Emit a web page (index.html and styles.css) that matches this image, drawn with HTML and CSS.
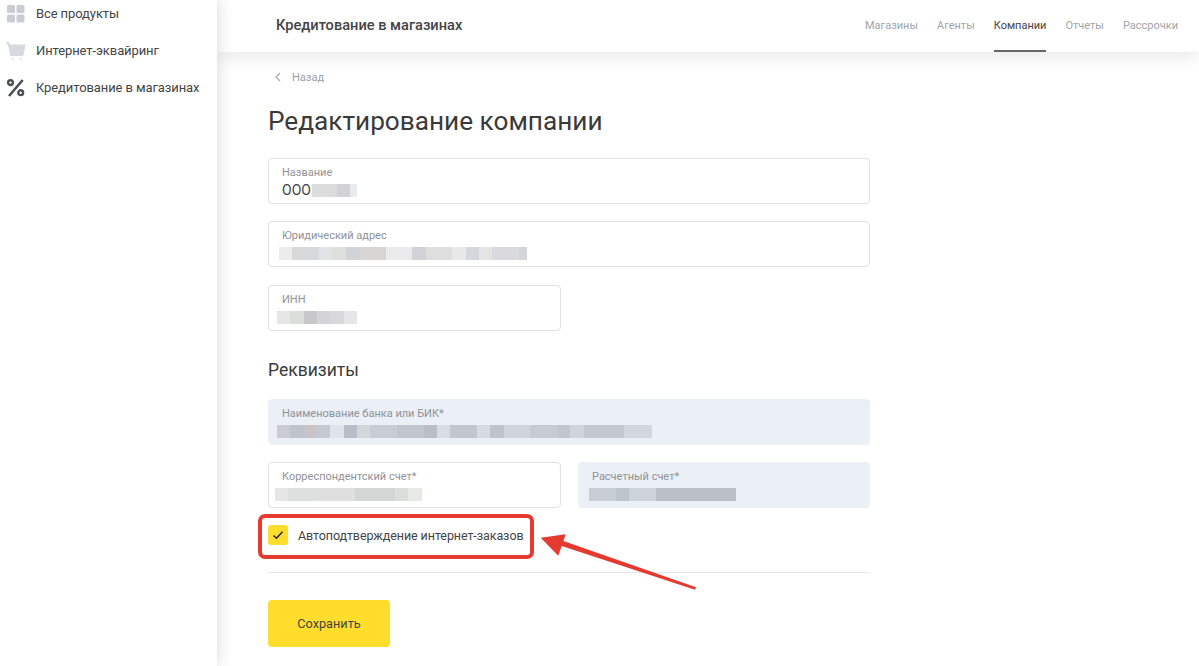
FILE: index.html
```html
<!DOCTYPE html>
<html lang="ru">
<head>
    <meta charset="UTF-8">
    <title>Редактирование компании</title>
    <link rel="stylesheet" href="styles.css">
</head>
<body>
    <!-- Sidebar -->
    <aside class="sidebar">
        <a class="side-item">
            <svg class="side-icon" viewBox="0 0 20 20"><rect x="1" y="1" width="8" height="8" rx="1.5"/><rect x="10.5" y="1" width="8" height="8" rx="1.5"/><rect x="1" y="10.5" width="8" height="8" rx="1.5"/><rect x="10.5" y="10.5" width="8" height="8" rx="1.5"/></svg>
            <span>Все продукты</span>
        </a>
        <a class="side-item">
            <svg class="side-icon side-icon-light" viewBox="0 0 20 20"><path d="M0.5 1h2.5l1 2.5h15.5l-2 10.5q-0.2 1-1.2 1H5.3q-1 0-1.2-1L2.2 4.5 0.5 2.6z"/><circle cx="6.5" cy="18.3" r="1"/><circle cx="14.5" cy="18.3" r="1"/></svg>
            <span>Интернет-эквайринг</span>
        </a>
        <a class="side-item side-item-active">
            <svg class="side-icon" viewBox="0 0 20 20"><path class="pct-line" d="M16.7 2L3 18"/><circle class="pct-ring" cx="4.5" cy="4.6" r="2.4"/><circle class="pct-ring" cx="14.7" cy="14.7" r="2.4"/></svg>
            <span>Кредитование в магазинах</span>
        </a>
    </aside>

    <div class="main">
        <!-- Top bar -->
        <header class="topbar">
            <div class="topbar-title">Кредитование в магазинах</div>
            <nav class="tabs">
                <a class="tab">Магазины</a>
                <a class="tab">Агенты</a>
                <a class="tab tab-active">Компании</a>
                <a class="tab">Отчеты</a>
                <a class="tab">Рассрочки</a>
            </nav>
        </header>

        <div class="content">
            <a class="back">
                <svg class="back-icon" viewBox="0 0 6 10"><path d="M5 1L1 5l4 4"/></svg>
                <span>Назад</span>
            </a>
            <h1>Редактирование компании</h1>

            <div class="form">
                <div class="field">
                    <div class="field-label">Название</div>
                    <div class="field-value">ООО <span class="blur blur-name"></span></div>
                </div>
                <div class="field">
                    <div class="field-label">Юридический адрес</div>
                    <div class="field-value"><span class="blur blur-address"></span></div>
                </div>
                <div class="row row-inn">
                    <div class="field">
                        <div class="field-label">ИНН</div>
                        <div class="field-value"><span class="blur blur-inn"></span></div>
                    </div>
                </div>

                <h2>Реквизиты</h2>

                <div class="field field-disabled">
                    <div class="field-label">Наименование банка или БИК*</div>
                    <div class="field-value"><span class="blur blur-bank"></span></div>
                </div>
                <div class="row">
                    <div class="field">
                        <div class="field-label">Корреспондентский счет*</div>
                        <div class="field-value"><span class="blur blur-corr"></span></div>
                    </div>
                    <div class="field field-disabled">
                        <div class="field-label">Расчетный счет*</div>
                        <div class="field-value"><span class="blur blur-account"></span></div>
                    </div>
                </div>

                <label class="check">
                    <span class="check-box">
                        <svg viewBox="0 0 12 10"><path d="M1.5 5.5L4.5 8.2 10.5 1.8"/></svg>
                    </span>
                    <span>Автоподтверждение интернет-заказов</span>
                </label>

                <div class="divider"></div>

                <button class="save-btn">Сохранить</button>
            </div>
        </div>
    </div>

    <!-- Annotation drawn over the screenshot -->
    <svg class="annotation" viewBox="0 0 1199 666">
        <rect class="note-frame" x="260" y="516" width="272" height="41" rx="5"/>
        <path class="note-arrow" d="M540.7 537.7L565.7 534.3 563.4 541 696 587.3 695 589.8 561.7 546 558.3 555.7z"/>
    </svg>
</body>
</html>
```
FILE: styles.css
```css
* {
    box-sizing: border-box;
}
body {
    margin: 0;
    height: 666px;
    overflow: hidden;
    display: flex;
    background-color: #fff;
    font-family: Roboto, 'Liberation Sans', sans-serif;
    color: #444;
}
/* Sidebar */
.sidebar {
    width: 217px;
    flex-shrink: 0;
    height: 666px;
    position: relative;
    z-index: 2;
    background-color: #fff;
    box-shadow: 0 0 16px rgba(0, 0, 0, 0.16);
}
.side-item {
    display: flex;
    align-items: center;
    height: 37px;
    padding-left: 6px;
    font-size: 13px;
    letter-spacing: -0.1px;
    color: #444;
}
.side-item:first-child {
    margin-top: -5px;
}
.side-icon {
    width: 20px;
    height: 20px;
    margin-right: 10px;
    fill: #c9cdd3;
    flex-shrink: 0;
}
.side-icon-light {
    fill: #d6d9de;
}
.side-item-active .side-icon {
    fill: none;
}
.pct-line {
    stroke: #4a4e54;
    stroke-width: 2.6;
}
.pct-ring {
    stroke: #4a4e54;
    stroke-width: 2.4;
}
/* Top bar */
.main {
    flex: 1;
    min-width: 0;
}
.topbar {
    height: 52px;
    display: flex;
    justify-content: space-between;
    align-items: center;
    padding: 0 21px 0 59px;
    position: relative;
    z-index: 1;
    background-color: #fff;
    box-shadow: 0 4px 20px rgba(0, 0, 0, 0.1);
}
.topbar-title {
    font-size: 14.6px;
    font-weight: 500;
    color: #444;
    margin-top: -2px;
}
.tabs {
    display: flex;
    align-self: stretch;
    gap: 19px;
}
.tab {
    display: flex;
    align-items: center;
    font-size: 11px;
    color: #a0a4aa;
    border-bottom: 2px solid transparent;
}
.tab-active {
    color: #444;
    border-bottom-color: #666;
}
/* Content */
.content {
    padding: 18px 0 0 51px;
}
.back {
    display: flex;
    align-items: center;
    height: 14px;
    font-size: 11px;
    color: #9a9ea5;
}
.back-icon {
    width: 6px;
    height: 10px;
    margin: 0 11px 0 7px;
    fill: none;
    stroke: #a5a9af;
    stroke-width: 1.3;
}
h1 {
    margin: 20px 0 20px;
    font-size: 26.2px;
    line-height: 34px;
    font-weight: 400;
    color: #3a3a3a;
}
.form {
    width: 602px;
    display: flex;
    flex-direction: column;
    gap: 17px;
}
.row {
    display: grid;
    grid-template-columns: 293px 292px;
    gap: 17px;
}
.row-inn {
    margin-top: 1px;
}
.field {
    height: 46px;
    padding: 7px 13px 0;
    border: 1px solid #dfe1e4;
    border-radius: 4px;
    background-color: #fff;
}
.field-disabled {
    border-color: #ebeff6;
    background-color: #ebeff6;
}
.field-label {
    font-size: 11px;
    line-height: 14px;
    color: #8f9297;
}
.field-value {
    display: flex;
    align-items: center;
    height: 18px;
    margin-top: 1px;
    font-size: 14px;
    color: #444;
    white-space: pre;
}
/* Blurred data */
.blur {
    display: block;
    height: 13px;
}
.blur-name {
    width: 45px;
    margin-left: -2px;
    background: linear-gradient(90deg, #dcdcdc 0 25px, #d3d3d6 25px 38px, #e8eaec 38px);
}
.blur-address {
    width: 248px;
    margin-left: -3px;
    background: linear-gradient(90deg, #ececec 0 13px, #d8d8d8 13px 27px, #d6d8dc 27px 40px, #e2e3e6 40px 53px, #dfdfdc 53px 67px, #d2d3d6 67px 80px, #d6d5d4 80px 107px, #ebebeb 107px 133px, #d2d2d6 133px 147px, #dedede 147px 173px, #e8e8e8 173px 187px, #d6d7dc 187px 200px, #e4e4e2 200px 213px, #dadade 213px 240px, #d4d6d6 240px);
}
.blur-inn {
    width: 80px;
    margin-left: -5px;
    background: linear-gradient(90deg, #e6e6e6 0 13px, #dcdedc 13px 27px, #c8c8ca 27px 40px, #d4d4d6 40px 53px, #d8d8da 53px 67px, #e6e6e6 67px);
}
.blur-bank {
    width: 375px;
    margin-left: -5px;
    background: linear-gradient(90deg, #c9ccd2 0 13px, #bfc4cc 13px 27px, #c8c4c8 27px 40px, #c4c9d2 40px 53px, #dfe3ea 53px 67px, #b8bdc8 67px 80px, #d2d7de 80px 93px, #c8ccd4 93px 120px, #c2c6cf 120px 147px, #b9bec9 147px 160px, #d8dce4 160px 173px, #c2c6ce 173px 200px, #d6dae2 200px 213px, #bfc3cc 213px 227px, #d0d4dc 227px 253px, #c7cbd3 253px 280px, #c2c6ce 280px 293px, #d0d4dc 293px 307px, #c4c8d0 307px 347px, #d2d6de 347px);
}
.blur-corr {
    width: 147px;
    margin-left: -7px;
    background: linear-gradient(90deg, #e6e6e6 0 13px, #dcdfdd 13px 40px, #e0dfe0 40px 80px, #d4d6d6 80px 120px, #dcdedc 120px 133px, #e8eae8 133px);
}
.blur-account {
    width: 147px;
    margin-left: -3px;
    background: linear-gradient(90deg, #c8ccd4 0 27px, #bcc4cc 27px 40px, #ced2da 40px 67px, #bbbfc8 67px 147px);
}
/* Headings and controls */
h2 {
    margin: 10px 0 0;
    font-size: 17.5px;
    line-height: 24px;
    font-weight: 400;
    color: #3a3a3a;
}
.check {
    display: flex;
    align-items: center;
    height: 20px;
    font-size: 12.5px;
    letter-spacing: -0.08px;
    color: #444;
}
.check-box {
    display: flex;
    align-items: center;
    justify-content: center;
    width: 20px;
    height: 20px;
    margin-right: 10px;
    border-radius: 3px;
    background-color: #ffdd2d;
}
.check-box svg {
    width: 12px;
    height: 10px;
    fill: none;
    stroke: #222;
    stroke-width: 1.5;
}
.divider {
    height: 1px;
    margin-top: 10px;
    background-color: #e6e7e9;
}
.save-btn {
    width: 122px;
    height: 47px;
    margin-top: 10px;
    border: none;
    border-radius: 4px;
    background-color: #ffdd2d;
    font-family: inherit;
    font-size: 12.7px;
    color: #444;
}
/* Annotation */
.annotation {
    position: absolute;
    top: 0;
    left: 0;
    width: 1199px;
    height: 666px;
    z-index: 3;
    pointer-events: none;
}
.note-frame {
    fill: none;
    stroke: #e53a2f;
    stroke-width: 4;
}
.note-arrow {
    fill: #e53a2f;
}
```
